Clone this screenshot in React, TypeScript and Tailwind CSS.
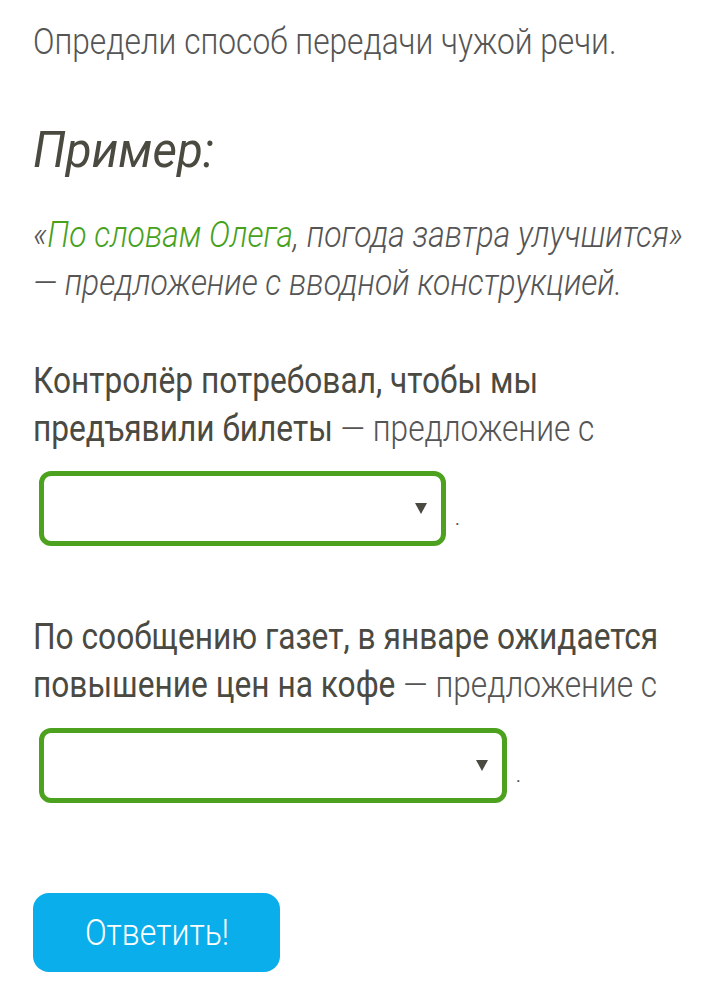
import React from 'react';

const cond = 'origin-left scale-x-[0.88] whitespace-nowrap';

function Choice({ width }: { width: string }) {
  return (
    <div className="flex items-center">
      <div
        className={`${width} h-[75px] rounded-[12px] border-[5px] border-[#4ca21e] bg-white flex items-center justify-end pr-[14px]`}
      >
        <span className="block w-0 h-0 border-l-[6px] border-r-[6px] border-t-[11px] border-l-transparent border-r-transparent border-t-[#4a4a42]" />
      </div>
      <span className="ml-[9px] mt-[20px] text-[#555] text-[18px] leading-none">.</span>
    </div>
  );
}

export default function App() {
  return (
    <div className="min-h-[1000px] bg-white overflow-hidden [font-family:Roboto,'Noto_Sans',sans-serif] px-[33px] pt-[18px]">
      <p className={`${cond} text-[36px] leading-[48px] font-light text-[#555]`}>
        Определи способ передачи чужой речи.
      </p>

      <h2 className="origin-left scale-x-[0.95] whitespace-nowrap mt-[56px] text-[50px] leading-[56px] italic font-normal text-[#4a4a40]">
        Пример:
      </h2>

      <p className="origin-left scale-x-[0.886] whitespace-nowrap mt-[33px] text-[36px] leading-[48px] italic font-light text-[#555]">
        «<span className="text-[#46a11b]">По словам Олега</span>, погода завтра улучшится»
        <br />— предложение с вводной конструкцией.
      </p>

      <p className={`${cond} mt-[50px] text-[36px] leading-[48px] font-normal text-[#4a4a42]`}>
        Контролёр потребовал, чтобы мы
        <br />
        предъявили билеты <span className="font-light text-[#555]">— предложение с</span>
      </p>
      <div className="mt-[18px] pl-[6px]">
        <Choice width="w-[407px]" />
      </div>

      <p className={`${cond} mt-[67px] text-[36px] leading-[48px] font-normal text-[#4a4a42]`}>
        По сообщению газет, в январе ожидается
        <br />
        повышение цен на кофе <span className="font-light text-[#555]">— предложение с</span>
      </p>
      <div className="mt-[19px] pl-[6px]">
        <Choice width="w-[468px]" />
      </div>

      <button className="mt-[90px] w-[247px] h-[79px] rounded-[16px] bg-[#0aaeea] text-white font-light text-[36px]">
        <span className="inline-block scale-x-[0.89]">Ответить!</span>
      </button>
    </div>
  );
}
